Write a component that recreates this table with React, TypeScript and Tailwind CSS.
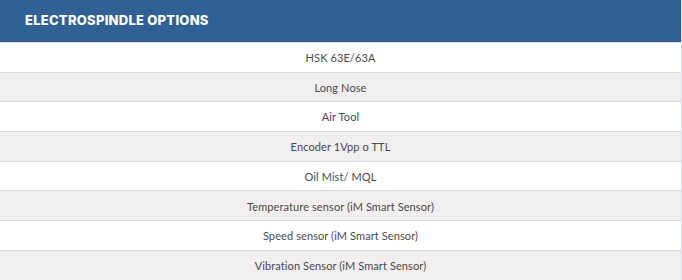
import React from "react";

const rows = [
  "HSK 63E/63A",
  "Long Nose",
  "Air Tool",
  "Encoder 1Vpp o TTL",
  "Oil Mist/ MQL",
  "Temperature sensor (iM Smart Sensor)",
  "Speed sensor (iM Smart Sensor)",
  "Vibration Sensor (iM Smart Sensor)",
];

export default function App() {
  return (
    <div className="w-[682px] h-[280px] overflow-hidden bg-white">
      <div className="flex w-[682px] flex-col border-r border-[#cfe3ef]">
        <div className="flex h-[42px] items-center bg-[#306194] pl-[25px]">
          <span className="text-[13px] font-extrabold tracking-[0.25px] text-white [font-family:Inter,'Open_Sans',sans-serif]">
            ELECTROSPINDLE OPTIONS
          </span>
        </div>
        {rows.map((r, i) => (
          <div
            key={r}
            className={
              "flex h-[29.7px] items-center justify-center border-t-[1.5px] border-[#dcdada] pt-[2px] text-[11px] tracking-[0.1px] text-[#4a4a4a] [font-family:Lato,sans-serif] " +
              (i % 2 === 0 ? "bg-white" : "bg-[#f0eeee]")
            }
          >
            {r}
          </div>
        ))}
      </div>
    </div>
  );
}
